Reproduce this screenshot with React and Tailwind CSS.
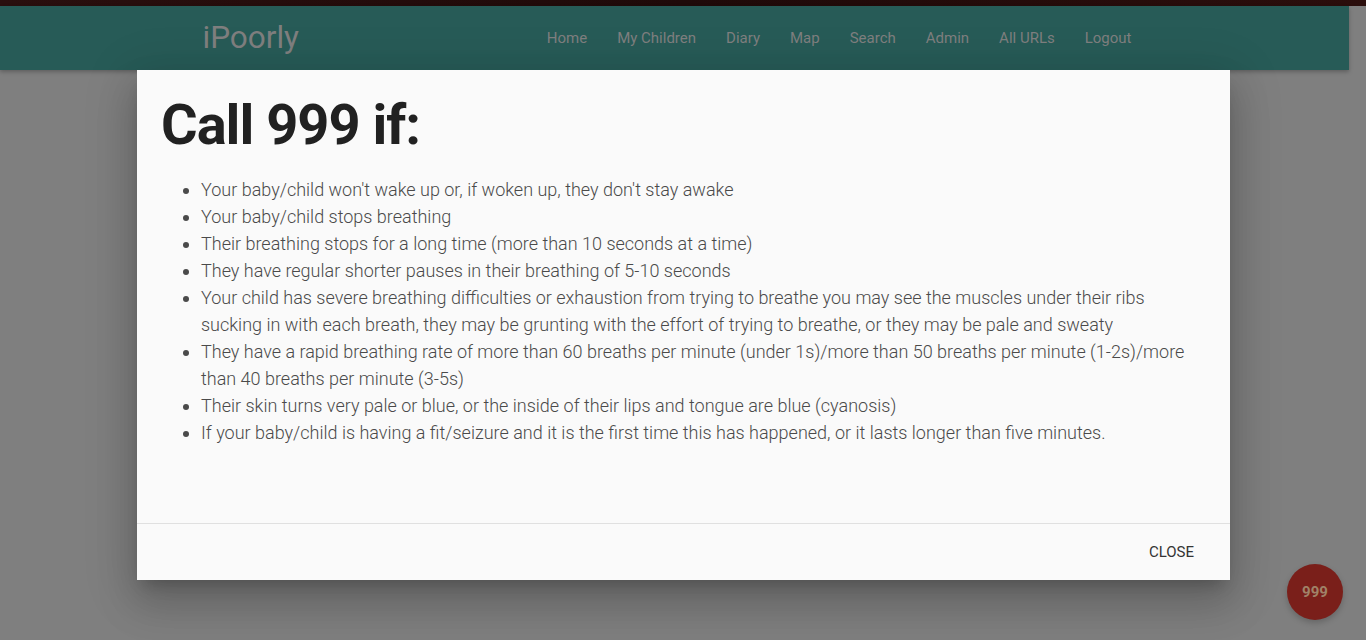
import React from 'react'

const NAV_LINKS = ['Home', 'My Children', 'Diary', 'Map', 'Search', 'Admin', 'All URLs', 'Logout']

const SYMPTOMS = [
  "Your baby/child won't wake up or, if woken up, they don't stay awake",
  'Your baby/child stops breathing',
  'Their breathing stops for a long time (more than 10 seconds at a time)',
  'They have regular shorter pauses in their breathing of 5-10 seconds',
  'Your child has severe breathing difficulties or exhaustion from trying to breathe you may see the muscles under their ribs sucking in with each breath, they may be grunting with the effort of trying to breathe, or they may be pale and sweaty',
  'They have a rapid breathing rate of more than 60 breaths per minute (under 1s)/more than 50 breaths per minute (1-2s)/more than 40 breaths per minute (3-5s)',
  'Their skin turns very pale or blue, or the inside of their lips and tongue are blue (cyanosis)',
  'If your baby/child is having a fit/seizure and it is the first time this has happened, or it lasts longer than five minutes.',
]

export default function App() {
  return (
    <div
      className="relative min-h-[640px] h-[640px] overflow-hidden bg-[#7f7f7f]"
      style={{ fontFamily: 'Roboto, "Liberation Sans", sans-serif' }}
    >
      {/* top banner strip (under overlay) */}
      <div className="h-[6px] w-full bg-gradient-to-r from-[#2a0f0e] via-[#1f0a09] to-[#2b0e0c]" />

      {/* nav, dimmed by the modal overlay */}
      <nav className="h-[64px] w-[1349px] bg-[#275b57] shadow-[0_2px_4px_rgba(0,0,0,0.25)]">
        <div className="mx-auto flex h-full w-[944px] items-center justify-between">
          <span className="text-[31.5px] leading-none text-[#7f7f7f]">iPoorly</span>
          <ul className="flex items-center">
            {NAV_LINKS.map((l) => (
              <li key={l} className="px-[15px] text-[15px] text-[#7f7f7f]">
                {l}
              </li>
            ))}
          </ul>
        </div>
      </nav>

      {/* modal */}
      <div className="absolute left-[137px] top-[70px] flex h-[510px] w-[1093px] flex-col bg-[#fafafa] shadow-[0_24px_38px_3px_rgba(0,0,0,0.14),0_9px_46px_8px_rgba(0,0,0,0.12),0_11px_15px_-7px_rgba(0,0,0,0.2)]">
        <div className="flex-1 px-6 pt-6">
          <h1 className="text-[56px] font-bold leading-[62px] tracking-[-1px] text-[#212121]">Call 999 if:</h1>
          <ul className="mt-[20px] list-disc pl-[40px] text-[18px] font-light leading-[27px] text-[#4a4a4a]">
            {SYMPTOMS.map((s) => (
              <li key={s}>{s}</li>
            ))}
          </ul>
        </div>
        <div className="flex h-[57px] items-center justify-end border-t border-[#e0e0e0] px-[6px] pt-[1px]">
          <button className="px-[30px] text-[15px] uppercase text-[#343434]">Close</button>
        </div>
      </div>

      {/* floating 999 button */}
      <div className="absolute left-[1287px] top-[564px] flex h-[56px] w-[56px] items-center justify-center rounded-full bg-[#7a1f1a] shadow-[0_3px_6px_rgba(0,0,0,0.2)]">
        <span className="text-[15px] font-bold text-[#a08268]">999</span>
      </div>
    </div>
  )
}
